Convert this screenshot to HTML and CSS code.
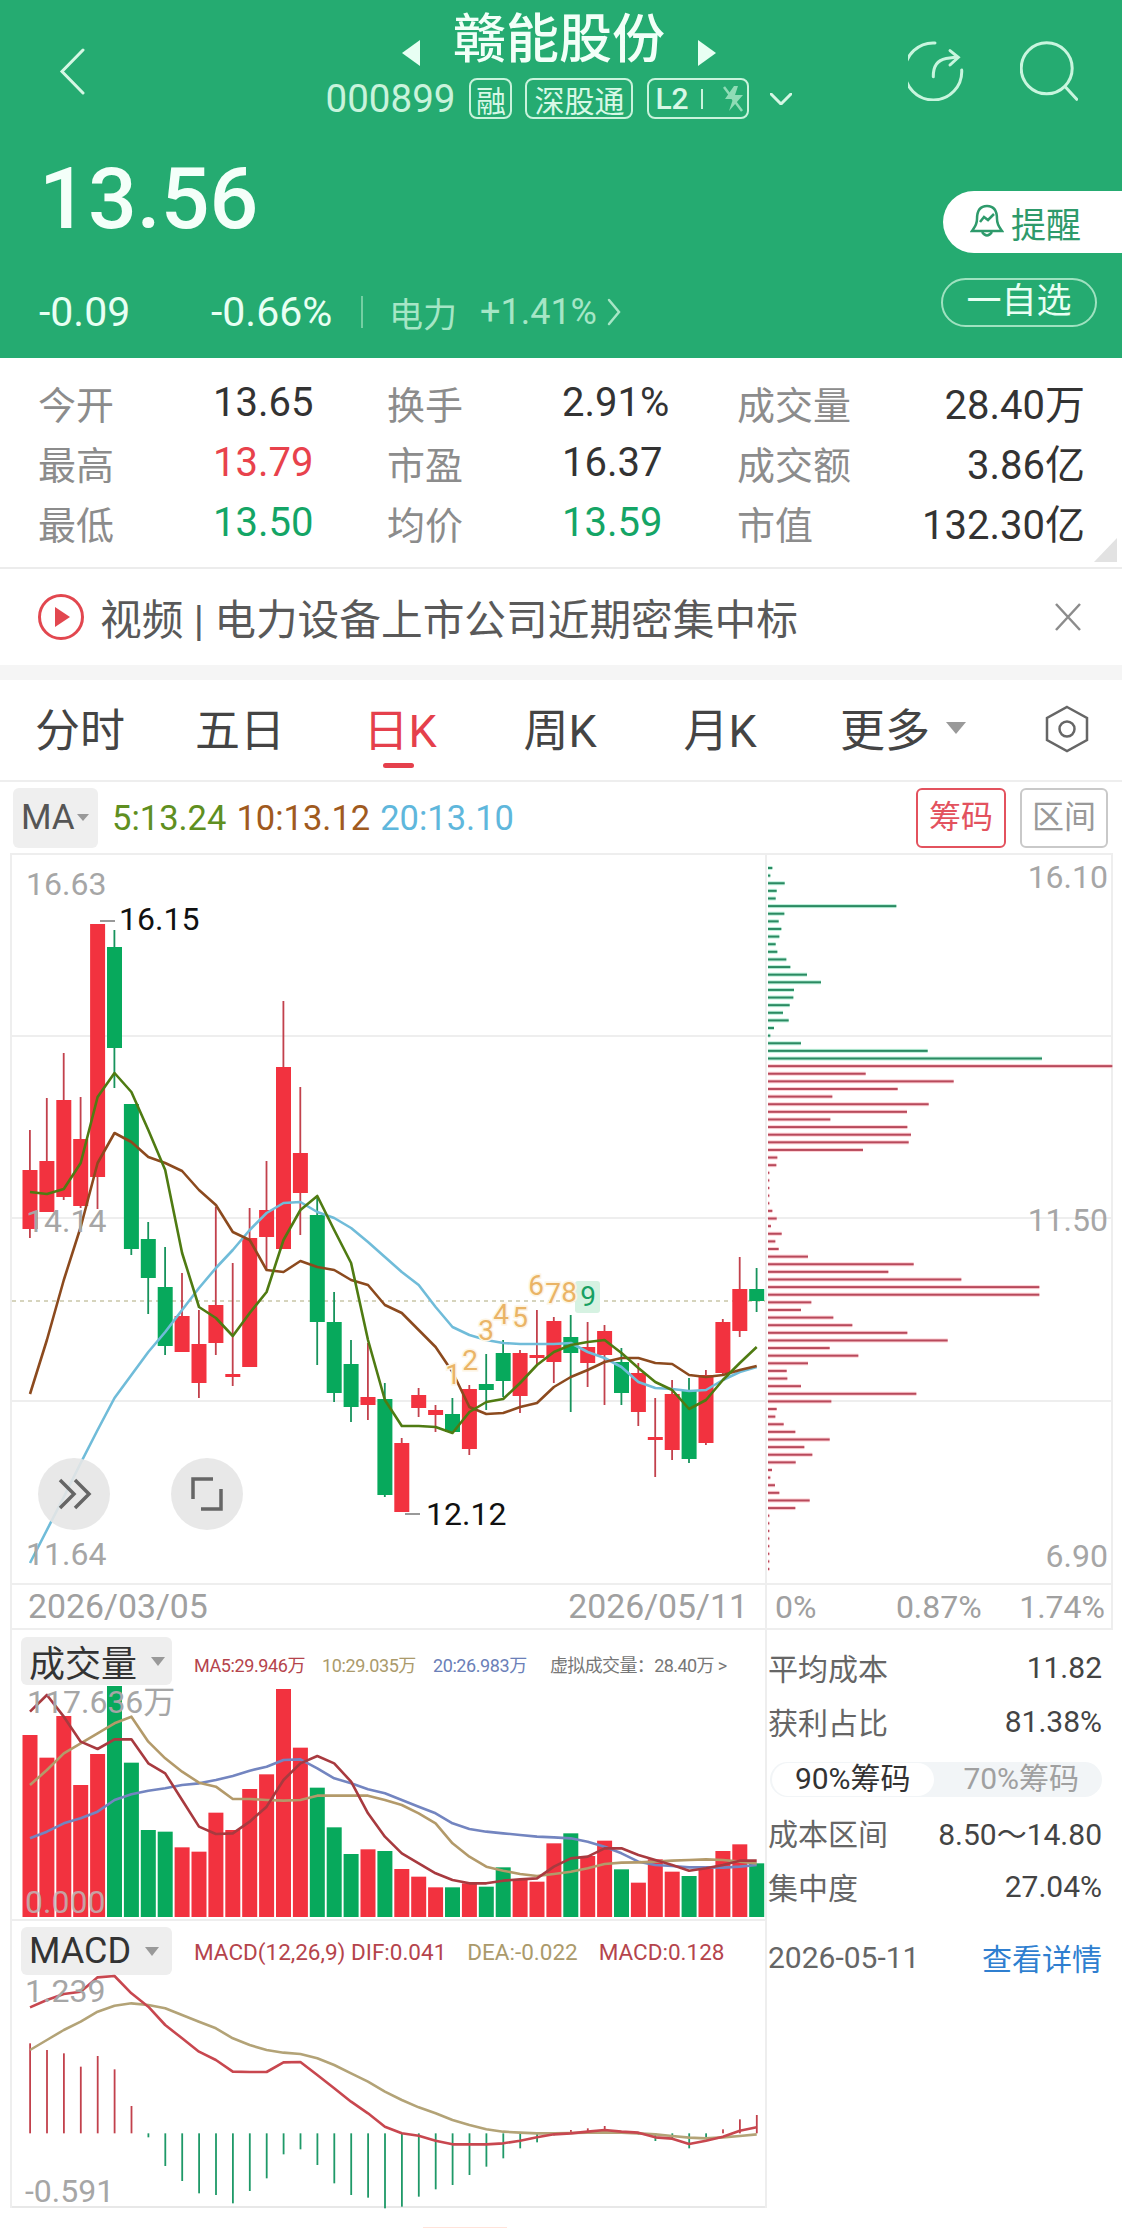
FILE: index.html

```html
<!DOCTYPE html>
<html lang="zh-CN">
<head>
  <meta charset="UTF-8" />
  <meta name="viewport" content="width=device-width, initial-scale=1.0">
  <title>赣能股份 000899</title>
  <link rel="stylesheet" href="styles.css">
</head>
<body>
  <div class="header">
    <div class="nav">
      <div class="nav-left">
        <svg class="back" width="26" height="47" viewBox="0 0 26 47"><path d="M24 2 3 23.5 24 45" /></svg>
      </div>
      <div class="nav-center">
        <div class="title-row">
          <svg width="20" height="26" viewBox="0 0 20 26"><path class="solid" d="M19 0v26L1 13z" /></svg>
          <span class="title">赣能股份</span>
          <svg width="20" height="26" viewBox="0 0 20 26"><path class="solid" d="M1 0v26l18-13z" /></svg>
        </div>
        <div class="sub-row">
          <span class="code">000899</span>
          <span class="chip chip-rong">融</span>
          <span class="chip chip-sgt">深股通</span>
          <span class="chip chip-l2">L2
            <i class="chip-sep"></i>
            <svg width="22" height="34" viewBox="0 0 22 34"><path class="bolt" d="M12 4 3 17h8L7 29l14-16h-8l3-9z" /><path class="bolt-slash" d="M2 5l18 24" /></svg>
          </span>
          <svg class="caret" width="22" height="12" viewBox="0 0 22 12"><path d="M1 1l10 10L21 1" /></svg>
        </div>
      </div>
      <div class="nav-right">
        <svg class="icon" width="58" height="60" viewBox="0 0 58 60"><path d="M27 2A28.500 28.500 0 1 0 53.700 29" /><path d="M25.300 35.700Q25 20 38 17.500L49 16" /><path d="M42 9.700 50.300 16.300 42 24" /></svg>
        <svg class="icon" width="58" height="60" viewBox="0 0 58 60"><circle cx="26.700" cy="27.300" r="25.500" /><path d="M45.700 46.300l11 12" /></svg>
      </div>
    </div>
    <div class="quote">
      <div class="quote-left">
        <div class="price">13.56</div>
        <div class="changes">
          <span class="chg-abs">-0.09</span>
          <span class="chg-pct">-0.66%</span>
          <i class="chg-sep"></i>
          <span class="sector">电力</span>
          <span class="sector-pct">+1.41%</span>
          <svg class="sector-go" width="14" height="28" viewBox="0 0 14 28"><path d="M2 2l10 12L2 26" /></svg>
        </div>
      </div>
      <div class="quote-right">
        <div class="pill-remind">
          <svg width="34" height="36" viewBox="0 0 34 36"><path d="M17 2C9 2 7 9 7 15c0 6-3 9-5 12h30c-2-3-5-6-5-12 0-6-2-13-10-13z" /><path d="M12 28q5 7 10 0" /><path d="M10 18l4-5 4 3 6-6" /></svg>
          提醒
        </div>
        <div class="pill-watch">一自选</div>
      </div>
    </div>
  </div>

  <div class="stats">
    <span class="stat-label">今开</span><span class="stat-value">13.65</span>
    <span class="stat-label">换手</span><span class="stat-value">2.91%</span>
    <span class="stat-label">成交量</span><span class="stat-value right">28.40万</span>
    <span class="stat-label">最高</span><span class="stat-value up">13.79</span>
    <span class="stat-label">市盈</span><span class="stat-value">16.37</span>
    <span class="stat-label">成交额</span><span class="stat-value right">3.86亿</span>
    <span class="stat-label">最低</span><span class="stat-value down">13.50</span>
    <span class="stat-label">均价</span><span class="stat-value down">13.59</span>
    <span class="stat-label">市值</span><span class="stat-value right">132.30亿</span>
    <i class="corner"></i>
  </div>

  <div class="news">
    <svg width="46" height="46" viewBox="0 0 46 46"><circle cx="23" cy="23" r="21.5" /><path d="M17 13l15 10-15 10z" /></svg>
    <span class="news-text">视频 | 电力设备上市公司近期密集中标</span>
    <svg class="news-close" width="26" height="28" viewBox="0 0 26 28"><path d="M1 1l24 26M25 1 1 27" /></svg>
  </div>
  <div class="band"></div>

  <div class="tabs">
    <span class="tab">分时</span>
    <span class="tab">五日</span>
    <span class="tab active">日K</span>
    <span class="tab">周K</span>
    <span class="tab">月K</span>
    <span class="tab tab-more">更多<i class="tri"></i></span>
    <svg class="hex" width="44" height="48" viewBox="0 0 44 48"><path d="M22 2 42 13v22L22 46 2 35V13z" /><circle cx="22" cy="24" r="7.5" /></svg>
  </div>

  <div class="toolbar">
    <div class="ma-select">MA<i class="tri-small"></i></div>
    <div class="ma-values">
      <span class="ma5">5:13.24</span>
      <span class="ma10">10:13.12</span>
      <span class="ma20">20:13.10</span>
    </div>
    <div class="tool-btns">
      <span class="tool-btn on">筹码</span>
      <span class="tool-btn">区间</span>
    </div>
  </div>

  <div class="charts">
    <div class="left-col">
      <svg class="chart" width="753" height="728" viewBox="12 855 753 728">
        <path class="grid" d="M12 1036H765M12 1218H765M12 1401H765" />
        <path class="last-line" d="M12 1301H765" />
        <g id="candles"></g>
        <g id="price-lines"></g>
        <rect class="nine-bg" x="575" y="1281" width="25" height="32" rx="3" />
        <g class="td">
          <text x="453" y="1384">1</text>
          <text x="470" y="1370">2</text>
          <text x="486" y="1340">3</text>
          <text x="501" y="1324">4</text>
          <text x="520" y="1327">5</text>
          <text x="536" y="1295">6</text>
          <text x="553" y="1303">7</text>
          <text x="569" y="1302">8</text>
          <text class="td-nine" x="588" y="1306">9</text>
        </g>
        <text class="axis" x="26" y="895">16.63</text>
        <text class="axis" x="26" y="1232">14.14</text>
        <text class="axis" x="26" y="1565">11.64</text>
        <path class="tick" d="M100 921h15M405 1514h15" />
        <text class="extreme" x="119" y="930">16.15</text>
        <text class="extreme" x="426" y="1525">12.12</text>
        <circle class="round-btn" cx="74" cy="1494" r="36" />
        <path class="round-icon" d="M60 1480l14 14-14 14M75 1480l14 14-14 14" />
        <circle class="round-btn" cx="207" cy="1494" r="36" />
        <path class="round-icon" d="M193 1499v-20h20M221 1489v20h-20" />
      </svg>
      <div class="date-axis">
        <span>2026/03/05</span>
        <span>2026/05/11</span>
      </div>
      <div class="panel-head">
        <div class="panel-select">成交量<i class="tri"></i></div>
        <div class="panel-legend">
          <span class="leg-ma5">MA5:29.946万</span>
          <span class="leg-ma10">10:29.035万</span>
          <span class="leg-ma20">20:26.983万</span>
          <span class="leg-virtual">虚拟成交量：28.40万 &gt;</span>
        </div>
      </div>
      <svg class="chart" width="753" height="233" viewBox="12 1686 753 233">
        <g id="volume"></g>
        <g id="volume-lines"></g>
        <text class="axis" x="27" y="1713">117.636万</text>
        <text class="axis axis-zero" x="25" y="1913">0.000</text>
      </svg>
      <div class="panel-head macd-head">
        <div class="panel-select">MACD<i class="tri"></i></div>
        <div class="panel-legend macd-legend">
          <span class="leg-ma5">MACD(12,26,9) DIF:0.041</span>
          <span class="leg-ma10">DEA:-0.022</span>
          <span class="leg-ma5">MACD:0.128</span>
        </div>
      </div>
      <svg class="chart" width="753" height="230" viewBox="12 1976 753 230">
        <g id="macd"></g>
        <g id="macd-lines"></g>
        <text class="axis" x="25" y="2002">1.239</text>
        <text class="axis" x="25" y="2202">-0.591</text>
      </svg>
    </div>

    <div class="right-col">
      <div class="chip-panel">
        <svg class="chart" width="346" height="728" viewBox="767 855 346 728">
          <path class="grid" d="M767 1036H1113M767 1218H1113M767 1401H1113" />
          <g id="chips"></g>
          <text class="axis axis-end" x="1108" y="888">16.10</text>
          <text class="axis axis-end" x="1108" y="1231">11.50</text>
          <text class="axis axis-end" x="1108" y="1567">6.90</text>
        </svg>
        <div class="pct-axis">
          <span>0%</span>
          <span class="pct-mid">0.87%</span>
          <span>1.74%</span>
        </div>
      </div>
      <div class="info">
        <div class="info-row"><span>平均成本</span><b>11.82</b></div>
        <div class="info-row"><span>获利占比</span><b>81.38%</b></div>
        <div class="toggle">
          <span class="toggle-item on">90%筹码</span>
          <span class="toggle-item">70%筹码</span>
        </div>
        <div class="info-row"><span>成本区间</span><b>8.50～14.80</b></div>
        <div class="info-row"><span>集中度</span><b>27.04%</b></div>
        <div class="info-row info-foot"><span>2026-05-11</span><a class="detail">查看详情</a></div>
      </div>
    </div>
  </div>
  <div class="next-hint"></div>

  <script src="chart.js"></script>
</body>
</html>
```

FILE: styles.css

```css
* {
  box-sizing: border-box;
}
body {
  margin: 0;
  background: white;
  font-family: Roboto, "Noto Sans CJK SC", sans-serif;
  color: #333;
  width: 1122px;
}
i {
  display: block;
}
svg {
  display: block;
  flex: none;
  fill: none;
}

/* header */
.header {
  height: 358px;
  background: #25ab71;
  color: #e8fff3;
}
.nav {
  display: grid;
  grid-template-columns: 1fr auto 1fr;
  height: 125px;
}
.nav-left {
  padding: 48px 0 0 59px;
}
.back path, .caret path, .icon path, .icon circle, .sector-go path {
  stroke: #d5f7e4;
  stroke-width: 3;
  stroke-linecap: round;
  fill: none;
}
.nav-center {
  margin: 6px 4px 0 0;
}
.title-row {
  display: flex;
  justify-content: center;
  align-items: center;
  gap: 32px;
  height: 68px;
}
.title-row svg {
  margin-top: 25px;
}
.solid {
  fill: #e8fff3;
}
.title {
  font-size: 53px;
  line-height: 60px;
  font-weight: 500;
  color: #f2fff8;
}
.sub-row {
  display: flex;
  align-items: center;
  margin-top: 4px;
  height: 41px;
}
.code {
  font-size: 38.500px;
  color: #c9f3dc;
  margin-right: 14px;
}
.chip {
  display: flex;
  align-items: center;
  justify-content: center;
  height: 41px;
  border: 2px solid #c9f3dc;
  border-radius: 8px;
  font-size: 30px;
  color: #d8f8e6;
}
.chip-rong {
  width: 43px;
  margin-right: 13px;
}
.chip-sgt {
  width: 108px;
  margin-right: 14px;
}
.chip-l2 {
  justify-content: flex-start;
  width: 102px;
  padding-left: 6px;
  gap: 9px;
  margin-right: 21px;
  font-weight: 500;
}
.chip-sep {
  width: 2px;
  height: 20px;
  margin: 0 10px 0 3px;
  background: #c9f3dc;
}
.bolt {
  fill: #8fdcb6;
}
.bolt-slash {
  stroke: #8fdcb6;
  stroke-width: 2.500;
}
.nav-right {
  display: flex;
  justify-content: flex-end;
  gap: 54px;
  padding: 41px 44px 0 0;
}
.icon path, .icon circle {
  stroke: #c8f5de;
}
.quote {
  display: flex;
  justify-content: space-between;
}
.quote-left {
  padding: 31px 0 0 39px;
}
.price {
  font-size: 86px;
  line-height: 86px;
  font-weight: 500;
  color: #f4fff9;
}
.changes {
  display: flex;
  align-items: center;
  margin: 50px 0 0 0;
  height: 40px;
  font-size: 41px;
}
.chg-abs {
  width: 172px;
}
.chg-pct {
  width: 150px;
}
.chg-sep {
  width: 2px;
  height: 32px;
  background: #74cfa3;
}
.sector {
  margin-left: 26px;
  width: 91px;
  font-size: 34px;
  color: #a6e6c6;
}
.sector-pct {
  width: 127px;
  font-size: 36px;
  color: #a6e6c6;
}
.sector-go path {
  stroke: #a6e6c6;
  stroke-width: 2.500;
}
.quote-right {
  display: flex;
  flex-direction: column;
  align-items: flex-end;
  padding-top: 66px;
}
.pill-remind {
  display: flex;
  align-items: center;
  gap: 7px;
  width: 179px;
  height: 62px;
  padding-left: 27px;
  background: white;
  border-radius: 31px 0 0 31px;
  color: #2e9a6b;
  font-size: 35px;
}
.pill-remind svg path {
  stroke: #2e9a6b;
  stroke-width: 2.500;
}
.pill-watch {
  width: 156px;
  height: 49px;
  margin: 25px 25px 0 0;
  border: 2px solid #9fe2c0;
  border-radius: 25px;
  text-align: center;
  font-size: 35px;
  line-height: 44px;
}

/* stats */
.stats {
  position: relative;
  display: grid;
  grid-template-columns: 175px 174px 175px 175px 120px 228px;
  grid-template-rows: repeat(3, 60px);
  align-items: center;
  height: 211px;
  padding: 14px 0 0 38px;
  border-bottom: 2px solid #ececec;
}
.stat-label {
  font-size: 38px;
  color: #8c8c8c;
  white-space: nowrap;
}
.stat-value {
  font-size: 40px;
  color: #333;
}
.stat-value.right {
  text-align: right;
}
.up {
  color: #e8424c;
}
.down {
  color: #14a566;
}
.corner {
  position: absolute;
  right: 5px;
  bottom: 5px;
  width: 23px;
  height: 24px;
  background: #e2e2e2;
  clip-path: polygon(100% 0, 100% 100%, 0 100%);
}

/* news */
.news {
  display: flex;
  align-items: center;
  height: 96px;
  padding: 0 41px 0 38px;
}
.news circle {
  stroke: #e2474f;
  stroke-width: 3;
}
.news svg:first-child path {
  fill: #e2474f;
}
.news-text {
  margin-left: 16px;
  font-size: 41.700px;
  color: #595959;
}
.news-close {
  margin-left: auto;
}
.news-close path {
  stroke: #8c8c8c;
  stroke-width: 2.500;
}
.band {
  height: 15px;
  background: #f5f5f5;
}

/* period tabs */
.tabs {
  display: flex;
  align-items: center;
  height: 102px;
  padding-bottom: 5px;
  border-bottom: 2px solid #eeeeee;
}
.tab {
  position: relative;
  display: flex;
  justify-content: center;
  align-items: center;
  width: 160px;
  font-size: 45px;
  color: #444;
}
.tab.active {
  color: #e5404c;
}
.tab.active::after {
  content: "";
  position: absolute;
  left: 63px;
  top: 68px;
  width: 31px;
  height: 5px;
  border-radius: 3px;
  background: #e5404c;
}
.tab-more {
  margin-left: 0;
  gap: 16px;
  width: 170px;
  padding-left: 36px;
}
.tri {
  width: 0;
  height: 0;
  border-left: 10px solid transparent;
  border-right: 10px solid transparent;
  border-top: 12px solid #999;
}
.hex {
  margin-left: 75px;
  margin-top: 2px;
}
.hex path, .hex circle {
  stroke: #666;
  stroke-width: 2.500;
}

/* MA toolbar */
.toolbar {
  display: flex;
  align-items: center;
  height: 71px;
  padding: 0 14px 0 13px;
}
.ma-select {
  display: flex;
  align-items: center;
  gap: 2px;
  width: 85px;
  height: 60px;
  padding-left: 8px;
  background: #efefef;
  border-radius: 6px;
  font-size: 35px;
  color: #555;
}
.tri-small {
  width: 0;
  height: 0;
  border-left: 6px solid transparent;
  border-right: 6px solid transparent;
  border-top: 7px solid #999;
}
.ma-values {
  display: flex;
  gap: 10px;
  margin-left: 14px;
  font-size: 34.500px;
}
.ma5 {
  color: #5f8f21;
}
.ma10 {
  color: #a05a1e;
}
.ma20 {
  color: #5fb7dc;
}
.tool-btns {
  display: flex;
  gap: 14px;
  margin-left: auto;
}
.tool-btn {
  width: 88px;
  height: 60px;
  border: 2px solid #c9c9c9;
  border-radius: 6px;
  text-align: center;
  font-size: 32px;
  line-height: 54px;
  color: #999;
}
.tool-btn.on {
  width: 90px;
  border-color: #e3525e;
  color: #e3525e;
}

/* charts */
.charts {
  display: grid;
  grid-template-columns: 753px 348px;
  margin-left: 10px;
  border-left: 2px solid #eeeeee;
  border-top: 2px solid #eeeeee;
  width: 1103px;
}
.chart {
  overflow: visible;
}
.left-col {
  border-bottom: 2px solid #e8e8e8;
}
.grid {
  stroke: #eeeeee;
  stroke-width: 2;
}
.last-line {
  stroke: #c9c6a8;
  stroke-width: 1.500;
  stroke-dasharray: 4 4;
}
.axis {
  font-size: 32px;
  fill: #a6a6a6;
}
.axis-end {
  text-anchor: end;
}
.axis-zero {
  fill: #bdbdbd;
  opacity: 0.8;
}
.extreme {
  font-size: 32px;
  fill: #111;
}
.tick {
  stroke: #999;
  stroke-width: 2;
}
.nine-bg {
  fill: #d6f2e2;
}
.td text {
  font-size: 28px;
  text-anchor: middle;
  fill: #eab466;
  stroke: #fdf4e3;
  stroke-width: 3px;
  paint-order: stroke;
}
.td .td-nine {
  fill: #17a063;
  stroke: none;
}
.round-btn {
  fill: #e5e5e5;
  fill-opacity: 0.9;
}
.round-icon {
  stroke: #666;
  stroke-width: 3.500;
}
.date-axis {
  display: flex;
  justify-content: space-between;
  align-items: center;
  height: 47px;
  padding: 0 17px 0 16px;
  border-top: 2px solid #eeeeee;
  border-bottom: 2px solid #eeeeee;
  font-size: 33.800px;
  color: #a0a0a0;
}
.panel-head {
  display: flex;
  height: 56px;
  padding: 7px 0 0 9px;
}
.macd-head {
  height: 57px;
  padding-top: 6px;
  border-top: 2px solid #eeeeee;
}
.panel-select {
  display: flex;
  align-items: center;
  gap: 14px;
  width: 151px;
  height: 48px;
  padding-left: 8px;
  background: #eeeeee;
  border-radius: 6px;
  font-size: 36px;
  color: #333;
}
.panel-select .tri {
  border-left-width: 7px;
  border-right-width: 7px;
  border-top-width: 9px;
}
.panel-legend {
  display: flex;
  gap: 17px;
  margin: 14px 0 0 22px;
  font-size: 18px;
  letter-spacing: -0.400px;
  line-height: 30px;
  white-space: nowrap;
}
.macd-legend {
  gap: 21px;
  font-size: 22.500px;
  letter-spacing: 0;
  margin-top: 10px;
}
.leg-ma5 {
  color: #b5444c;
}
.leg-ma10 {
  color: #ab9a6b;
}
.leg-ma20 {
  color: #6b7fb8;
}
.leg-virtual {
  margin-left: 6px;
  letter-spacing: -0.600px;
  color: #777;
}
.right-col {
  border-left: 2px solid #eeeeee;
}
.chip-panel {
  border-right: 2px solid #eeeeee;
}
.pct-axis {
  display: flex;
  justify-content: space-between;
  align-items: center;
  height: 47px;
  padding: 0 6px 0 8px;
  border-top: 2px solid #eeeeee;
  border-bottom: 2px solid #eeeeee;
  font-size: 32px;
  color: #a0a0a0;
}
.pct-mid {
  margin-left: 42px;
}

/* chip info */
.info {
  padding: 10px 11px 0 1px;
}
.info-row {
  display: flex;
  justify-content: space-between;
  align-items: center;
  height: 54px;
  font-size: 30px;
  color: #666;
}
.info-row b {
  font-weight: 400;
  color: #444;
}
.toggle {
  display: flex;
  height: 35px;
  margin: 14px 0 8px 2px;
  padding: 1px 0 1px 2px;
  background: #f2f5f7;
  border-radius: 18px;
  font-size: 30px;
  line-height: 32px;
  color: #a0a0a0;
}
.toggle-item {
  width: 163px;
  text-align: center;
  margin-left: 7px;
}
.toggle-item.on {
  margin-left: 0;
  background: white;
  border-radius: 18px;
  color: #333;
}
.info-foot {
  margin-top: 17px;
}
.detail {
  color: #2f7fd0;
}
.next-hint {
  width: 84px;
  height: 1px;
  margin: 19px 0 0 423px;
  background: #ffe3da;
}
```

FILE: chart.js

```js
const RED = '#f2323f';
const GREEN = '#07a95c';
const xAt = i => 30 + i * 16.9;

// color, wick top, body top, body bottom, wick bottom
const candles = [
  ['r',1130,1170,1229,1238],['r',1098,1161,1212,1212],['r',1053,1100,1197,1200],['r',1097,1139,1206,1208],
  ['r',924,924,1177,1209],['g',930,947,1048,1088],['g',1104,1104,1249,1255],['g',1222,1239,1278,1314],
  ['g',1247,1287,1346,1355],['r',1273,1316,1352,1352],['r',1310,1344,1383,1398],['r',1207,1305,1343,1355],
  ['r',1263,1374,1377,1386],['r',1208,1238,1367,1367],['r',1161,1210,1237,1270],['r',1001,1067,1249,1249],
  ['r',1087,1153,1193,1235],['g',1197,1215,1322,1365],['g',1292,1322,1393,1402],['g',1340,1364,1407,1422],
  ['r',1343,1397,1405,1420],['g',1383,1399,1495,1497],['r',1438,1443,1512,1512],['r',1388,1395,1408,1417],
  ['r',1405,1410,1415,1432],['g',1398,1414,1432,1433],['r',1385,1389,1449,1455],['g',1354,1384,1390,1410],
  ['g',1340,1353,1381,1397],['r',1350,1353,1396,1413],['r',1310,1355,1357,1365],['r',1317,1321,1362,1383],
  ['g',1315,1337,1353,1412],['r',1322,1347,1363,1387],['r',1325,1331,1355,1405],['g',1348,1362,1393,1405],
  ['r',1363,1373,1412,1426],['r',1398,1437,1438,1477],['r',1380,1394,1450,1460],['g',1378,1390,1459,1463],
  ['r',1370,1375,1443,1445],['r',1319,1322,1373,1375],['r',1257,1289,1331,1337],['g',1268,1289,1301,1312]
];

const ma5 = [1192,1194,1189,1163,1097,1073,1092,1130,1170,1253,1307,1318,1336,1313,1292,1240,1210,1196,1230,1263,1340,1400,1426,1426,1427,1433,1412,1402,1399,1383,1365,1352,1345,1342,1340,1353,1368,1382,1390,1409,1400,1380,1363,1347];
const ma10 = [1394,1340,1280,1227,1163,1133,1142,1157,1163,1171,1190,1205,1232,1240,1270,1272,1261,1267,1270,1280,1285,1305,1313,1330,1347,1372,1407,1414,1413,1407,1403,1387,1377,1370,1362,1358,1358,1363,1364,1375,1377,1375,1370,1366];
const ma20 = [1563,1530,1497,1463,1430,1398,1375,1352,1332,1310,1288,1268,1250,1230,1213,1203,1202,1212,1218,1228,1242,1257,1272,1285,1307,1327,1335,1340,1343,1344,1344,1344,1343,1352,1358,1367,1382,1388,1389,1391,1390,1380,1372,1367];

const volumeTops = [405,473,348,555,462,258,488,690,695,742,755,638,690,567,523,267,443,563,682,762,748,753,807,830,862,862,850,860,802,840,845,730,700,768,722,808,848,778,815,828,805,753,733,790];
const volMa5 = [335,285,350,425,447,418,418,490,520,600,680,702,700,665,620,540,490,468,490,545,640,710,760,790,820,840,850,850,842,838,835,800,775,770,745,745,765,780,795,812,805,795,782,782];
const volMa10 = [555,510,460,430,400,370,350,425,475,515,548,560,597,597,600,602,600,587,587,587,587,600,615,640,670,730,770,800,812,822,828,822,815,805,792,788,787,785,782,780,778,780,785,790];
const volMa20 = [715,695,670,655,635,600,583,572,565,555,550,540,528,512,500,480,478,505,535,550,568,580,600,620,640,670,687,695,700,705,710,712,715,725,740,760,785,795,798,802,802,803,800,795];

// far end of each MACD bar, bars start at the zero line
const macdBars = [430,450,460,500,468,508,618,712,798,843,880,885,910,873,835,763,748,795,850,885,893,925,920,890,868,855,825,800,775,745,727,706,690,685,678,700,704,723,720,745,715,688,658,645];
const dif = [322,300,282,275,232,228,280,320,375,415,455,480,515,516,516,487,486,525,565,605,640,680,700,707,722,733,733,733,730,722,712,703,700,695,690,695,698,712,716,732,722,710,692,682];
const dea = [450,420,390,365,335,317,310,315,325,345,365,385,415,435,450,458,462,475,495,520,545,575,600,622,640,660,675,688,695,698,700,700,699,698,697,698,700,703,708,713,715,712,708,703];

// right edge of each chip row, 3x from x=750
const chipEdges = [66,60,103,79,76,438,102,85,93,87,76,81,108,120,170,212,131,129,118,98,115,71,60,152,532,875,
  1086,346,610,442,246,535,470,240,471,482,475,338,81,78,57,57,57,57,57,66,79,62,94,75,85,173,490,414,633,867,867,183,152,249,306,471,592,238,324,173,109,111,152,498,243,79,75,100,135,238,162,186,136,65,60,74,87,178,135,57,57,57,57,57,57,57,57];
const GREEN_ROWS = 26;

function rect(x, y, w, h, fill, opacity) {
  const op = opacity ? ` fill-opacity="${opacity}"` : '';
  return `<rect x="${x}" y="${y}" width="${w}" height="${h}" fill="${fill}"${op}/>`;
}

function polyline(values, color, width, toY) {
  const pts = values.map((v, i) => `${xAt(i)},${toY ? toY(v) : v}`).join(' ');
  return `<polyline points="${pts}" fill="none" stroke="${color}" stroke-width="${width}" stroke-linejoin="round"/>`;
}

let html = '';
candles.forEach((c, i) => {
  const color = c[0] === 'r' ? RED : GREEN;
  const x = xAt(i);
  html += rect(x - 1, c[1], 1.8, c[4] - c[1], c[0] === 'r' ? '#c2414c' : '#17935c');
  html += rect(x - 7.5, c[2], 15, Math.max(c[3] - c[2], 3), color);
});
document.getElementById('candles').innerHTML = html;

document.getElementById('price-lines').innerHTML =
  polyline(ma20, '#70bcd9', 2.6) + polyline(ma10, '#8c4a1e', 2.6) + polyline(ma5, '#4f7b12', 2.6);

const volY = v => 1600 + v / 3;
html = '';
volumeTops.forEach((top, i) => {
  html += rect(xAt(i) - 7.5, volY(top), 15, 1917 - volY(top), candles[i][0] === 'r' ? RED : GREEN);
});
document.getElementById('volume').innerHTML = html;
document.getElementById('volume-lines').innerHTML =
  polyline(volMa20, '#7385c0', 2.6, volY) + polyline(volMa10, '#b39a6a', 2.6, volY) + polyline(volMa5, '#a83a3f', 2.6, volY);

const macdY = v => 1900 + v / 3;
const zero = macdY(700);
html = '';
macdBars.forEach((end, i) => {
  const y = macdY(end);
  const isUp = y < zero && i !== 35;
  html += rect(xAt(i) - 0.8, Math.min(y, zero), 1.8, Math.abs(y - zero), isUp ? '#c2414c' : '#1f9968');
});
document.getElementById('macd').innerHTML = html;
document.getElementById('macd-lines').innerHTML =
  polyline(dea, '#b3a377', 2.6, macdY) + polyline(dif, '#c8474f', 2.6, macdY);

html = '';
chipEdges.forEach((edge, i) => {
  const y = 868 + i * 7.62;
  const w = (edge - 53) / 3;
  const isGreen = i < GREEN_ROWS;
  html += rect(768, y - 2, w, 4, isGreen ? '#a9ebd0' : '#fcc3c8', 0.8);
  html += rect(768, y - 1, w, 2, isGreen ? '#2b8a62' : '#b84a5c');
});
document.getElementById('chips').innerHTML = html;
```
